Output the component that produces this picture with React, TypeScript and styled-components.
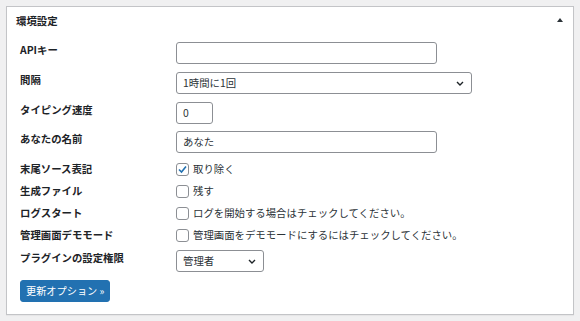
import styled, { createGlobalStyle } from "styled-components";

const GlobalStyle = createGlobalStyle`
  body {
    margin: 0;
    background: #f0f0f1;
    font-family: "Noto Sans CJK JP", "Noto Sans", sans-serif;
    color: #1d2327;
  }
`;

const Page = styled.div`
  padding: 6px;
`;

const Panel = styled.section`
  box-sizing: border-box;
  width: 568px;
  height: 309px;
  background: #fff;
  border: 1px solid #c3c4c7;
  box-shadow: 0 1px 1px rgba(0, 0, 0, 0.04);
`;

const Header = styled.header`
  display: flex;
  justify-content: space-between;
  align-items: center;
  padding: 6px 10px 0 9px;
  height: 16px;

  & h2 {
    margin: 0;
    font-size: 10.4px;
    line-height: 16px;
    font-weight: 700;
  }
`;

const Toggle = styled.span`
  width: 0;
  height: 0;
  border-left: 3px solid transparent;
  border-right: 3px solid transparent;
  border-bottom: 4px solid #2c3338;
  margin-top: -2px;
`;

const Form = styled.form`
  padding: 13px 0 0 13px;
`;

const Row = styled.div<{ $gap: number; $h: number; $center?: boolean }>`
  display: grid;
  grid-template-columns: 156px 1fr;
  align-items: ${(p) => (p.$center ? "center" : "start")};
  height: ${(p) => p.$h}px;
  margin-top: ${(p) => p.$gap}px;
`;

const Label = styled.label`
  font-size: 10.4px;
  line-height: 16px;
  font-weight: 700;
  white-space: nowrap;
`;

const TextBox = styled.div<{ $w: number }>`
  box-sizing: border-box;
  width: ${(p) => p.$w}px;
  height: 22px;
  border: 1px solid #8c8f94;
  border-radius: 3px;
  padding: 0 6px;
  font-size: 10.4px;
  line-height: 20px;
  color: #2c3338;
  background: #fff;
`;

const SelectBox = styled(TextBox)`
  display: flex;
  justify-content: space-between;
  align-items: center;
  padding-right: 7px;
`;

const CheckLabel = styled.label`
  display: flex;
  align-items: center;
  gap: 4px;
  font-size: 10.4px;
  line-height: 16px;
  color: #2c3338;
  white-space: nowrap;
`;

const Box = styled.span`
  box-sizing: border-box;
  width: 13px;
  height: 13px;
  border: 1px solid #8c8f94;
  border-radius: 3px;
  background: #fff;
  display: flex;
  align-items: center;
  justify-content: center;
`;

const Button = styled.button`
  display: block;
  margin-top: 8px;
  height: 22px;
  padding: 0 5px;
  background: #2271b1;
  border: 1px solid #2271b1;
  border-radius: 3px;
  color: #fff;
  font-family: inherit;
  font-size: 10.2px;
  line-height: 20px;
`;

const Chevron = () => (
  <svg width="8" height="5" viewBox="0 0 8 5">
    <path d="M1 1 L4 4 L7 1" fill="none" stroke="#1d2327" strokeWidth="1.4" />
  </svg>
);

const Checkbox = ({ checked, text }: { checked?: boolean; text: string }) => (
  <CheckLabel>
    <Box>
      {checked && (
        <svg width="11" height="11" viewBox="0 0 11 11">
          <path d="M2 5.5 L4.5 8 L9 2.5" fill="none" stroke="#2271b1" strokeWidth="1.6" />
        </svg>
      )}
    </Box>
    {text}
  </CheckLabel>
);

const App = () => (
  <Page>
    <GlobalStyle />
    <Panel>
      <Header>
        <h2>環境設定</h2>
        <Toggle />
      </Header>
      <Form>
        <Row $gap={0} $h={22}>
          <Label>APIキー</Label>
          <TextBox $w={261} />
        </Row>
        <Row $gap={8} $h={22}>
          <Label>間隔</Label>
          <SelectBox $w={296}>
            1時間に1回
            <Chevron />
          </SelectBox>
        </Row>
        <Row $gap={8} $h={22}>
          <Label>タイピング速度</Label>
          <TextBox $w={37}>0</TextBox>
        </Row>
        <Row $gap={7} $h={22}>
          <Label>あなたの名前</Label>
          <TextBox $w={261}>あなた</TextBox>
        </Row>
        <Row $gap={5} $h={22} $center>
          <Label>末尾ソース表記</Label>
          <Checkbox checked text="取り除く" />
        </Row>
        <Row $gap={0} $h={22} $center>
          <Label>生成ファイル</Label>
          <Checkbox text="残す" />
        </Row>
        <Row $gap={0} $h={22} $center>
          <Label>ログスタート</Label>
          <Checkbox text="ログを開始する場合はチェックしてください。" />
        </Row>
        <Row $gap={0} $h={22} $center>
          <Label>管理画面デモモード</Label>
          <Checkbox text="管理画面をデモモードにするにはチェックしてください。" />
        </Row>
        <Row $gap={4} $h={22}>
          <Label>プラグインの設定権限</Label>
          <SelectBox $w={88}>
            管理者
            <Chevron />
          </SelectBox>
        </Row>
        <Button type="button">更新オプション »</Button>
      </Form>
    </Panel>
  </Page>
);

export default App;
